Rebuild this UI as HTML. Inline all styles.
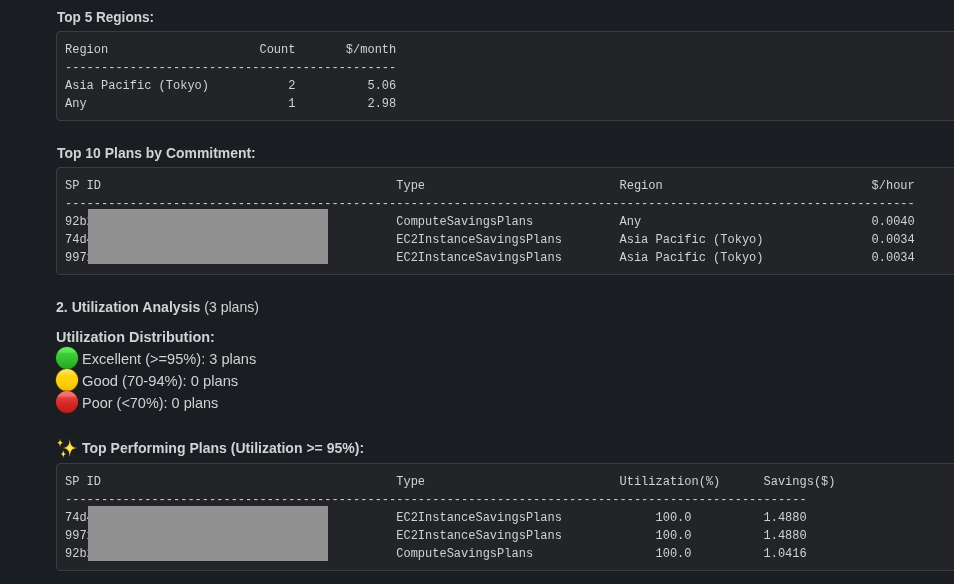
<!DOCTYPE html>
<html><head><meta charset="utf-8">
<style>
html,body{margin:0;padding:0;}
.l,pre{will-change:transform;}
body{width:954px;height:584px;overflow:hidden;background:#1a1d21;position:relative;color:#d1d2d3;font-family:"Liberation Sans",sans-serif;font-size:15px;}
.l{position:absolute;left:57px;line-height:22px;white-space:nowrap;}
.m{display:inline-block;transform-origin:0 50%;}
b{font-weight:700;}
.box{position:absolute;left:56px;width:1000px;box-sizing:border-box;border:1px solid #3c3d41;background:#232428;border-radius:4px;padding:9px 8px 7px;}
pre{margin:0;font-family:"Liberation Mono",monospace;font-size:12px;line-height:18px;color:#d1d2d3;white-space:pre;}
.red{position:absolute;left:88px;width:240px;height:55px;background:#919191;}
.emo{position:absolute;left:56px;width:22px;height:22px;border-radius:50%;}
.g{background:linear-gradient(#62f05e 0%,#58e454 22%,#3ecf38 30%,#33bf2e 60%,#24a622 100%);box-shadow:0 0 0 0.5px rgba(20,90,20,.6);}
.y{background:linear-gradient(#ffe45a 0%,#ffdc3a 22%,#fdd20e 32%,#fccf08 70%,#f2bc00 100%);box-shadow:0 0 0 0.5px rgba(150,110,0,.6);}
.r{background:linear-gradient(#f27a7a 0%,#ee6a6a 22%,#e03a3a 32%,#d42828 60%,#c21a1a 100%);box-shadow:0 0 0 0.5px rgba(110,10,10,.6);}
</style></head><body>

<div class="l" style="top:6px"><b class="m" style="transform:scaleX(0.905)">Top 5 Regions:</b></div>
<div class="box" style="top:31px"><pre>Region                     Count       $/month
----------------------------------------------
Asia Pacific (Tokyo)           2          5.06
Any                            1          2.98</pre></div>

<div class="l" style="top:142px"><b class="m" style="transform:scaleX(0.929)">Top 10 Plans by Commitment:</b></div>
<div class="box" style="top:167px"><pre>SP ID                                         Type                           Region                             $/hour
----------------------------------------------------------------------------------------------------------------------
92b2aaaaaaaaaaaaaaaaaaaaaaaaaaaaaaa           ComputeSavingsPlans            Any                                0.0040
74d4aaaaaaaaaaaaaaaaaaaaaaaaaaaaaaa           EC2InstanceSavingsPlans        Asia Pacific (Tokyo)               0.0034
9971aaaaaaaaaaaaaaaaaaaaaaaaaaaaaaa           EC2InstanceSavingsPlans        Asia Pacific (Tokyo)               0.0034</pre></div>
<div class="red" style="top:209px"></div>

<div class="l" style="top:296px;left:56.4px"><span class="m" style="transform:scaleX(0.939)"><b>2. Utilization Analysis</b> (3 plans)</span></div>
<div class="l" style="top:326px;left:56.4px"><b class="m" style="transform:scaleX(0.963)">Utilization Distribution:</b></div>
<div class="emo g" style="top:347px"></div>
<div class="l" style="top:348px;left:82px"><span class="m" style="transform:scaleX(0.972)">Excellent (&gt;=95%): 3 plans</span></div>
<div class="emo y" style="top:369px"></div>
<div class="l" style="top:370px;left:82px"><span class="m" style="transform:scaleX(0.981)">Good (70-94%): 0 plans</span></div>
<div class="emo r" style="top:391px"></div>
<div class="l" style="top:392px;left:82px"><span class="m" style="transform:scaleX(0.964)">Poor (&lt;70%): 0 plans</span></div>

<svg style="position:absolute;left:0;top:0" width="100" height="584" viewBox="0 0 100 584">
<defs><radialGradient id="sg" cx="50%" cy="50%" r="50%"><stop offset="0" stop-color="#fff08a"/><stop offset="0.4" stop-color="#fcd22c"/><stop offset="1" stop-color="#e6a000"/></radialGradient></defs>
<path fill="url(#sg)" d="M69.8,438.6 C70.4,446 71.8,447.4 77.4,448 C71.8,448.6 70.4,450 69.8,457.4 C69.2,450 67.8,448.6 62.4,448 C67.8,447.4 69.2,446 69.8,438.6Z"/>
<path fill="url(#sg)" d="M60.1,438.6 C60.45,441.7 61.2,442.45 63.1,442.8 C61.2,443.15 60.45,443.9 60.1,447.4 C59.75,443.9 59,443.15 57.1,442.8 C59,442.45 59.75,441.7 60.1,438.6Z"/>
<path fill="url(#sg)" d="M63.3,450 C63.65,452.9 64.4,453.65 66.3,454 C64.4,454.35 63.65,455.1 63.3,458.4 C62.95,455.1 62.2,454.35 60.4,454 C62.2,453.65 62.95,452.9 63.3,450Z"/>
</svg>
<div class="l" style="top:437px;left:82px"><b class="m" style="transform:scaleX(0.936)">Top Performing Plans (Utilization &gt;= 95%):</b></div>
<div class="box" style="top:463px"><pre>SP ID                                         Type                           Utilization(%)      Savings($)
-------------------------------------------------------------------------------------------------------
74d4aaaaaaaaaaaaaaaaaaaaaaaaaaaaaaa           EC2InstanceSavingsPlans             100.0          1.4880
9971aaaaaaaaaaaaaaaaaaaaaaaaaaaaaaa           EC2InstanceSavingsPlans             100.0          1.4880
92b2aaaaaaaaaaaaaaaaaaaaaaaaaaaaaaa           ComputeSavingsPlans                 100.0          1.0416</pre></div>
<div class="red" style="top:506px"></div>

</body></html>
